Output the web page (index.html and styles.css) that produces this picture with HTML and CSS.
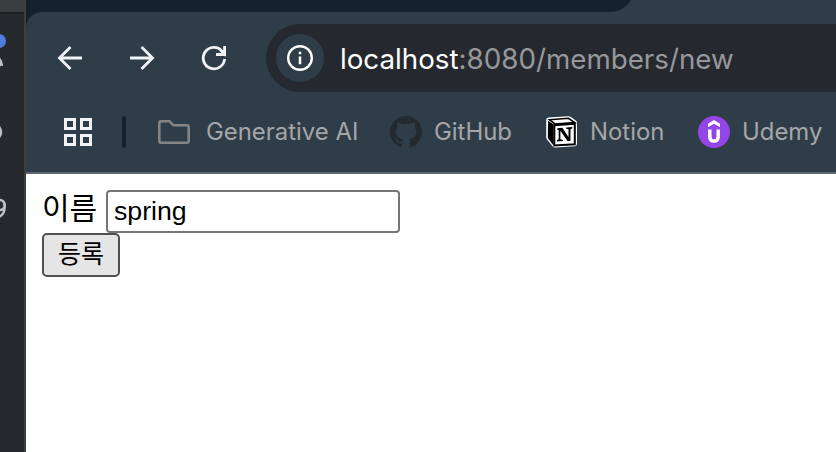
FILE: index.html
```html
<!DOCTYPE html>
<html lang="ko">
<head>
<meta charset="utf-8">
<title>localhost:8080/members/new</title>
<link rel="stylesheet" href="styles.css">
</head>
<body>
<div class="desktop">
  <aside class="behind">
    <svg width="24" height="226" viewBox="0 0 24 226" fill="none">
      <circle cx="-1" cy="41" r="7" fill="#4e7edb"/>
      <path d="M-3 57q4 3 4.500 9" stroke="#bcbec4" stroke-width="3.500"/>
      <ellipse cx="-4" cy="132" rx="5" ry="6.500" stroke="#bcbec4" stroke-width="2.500"/>
      <ellipse cx="0" cy="205" rx="4.600" ry="5" stroke="#bcbec4" stroke-width="2.500"/>
      <path d="M4.600 204q.6 9-4 12-3 1-6-1" stroke="#bcbec4" stroke-width="2.500"/>
    </svg>
  </aside>
  <main class="window">
    <div class="tabs"><div class="strip"></div></div>
    <header class="chrome">
      <div class="toolbar">
        <svg class="nav" viewBox="0 0 24 24"><path d="M24 12H2M12.500 1 1.500 12l11 11"/></svg>
        <svg class="nav" viewBox="0 0 24 24"><path d="M0 12h22M11.500 1l11 11-11 11"/></svg>
        <svg class="nav" viewBox="0 0 24 24"><path d="M22.600 13A10.700 10.700 0 1 1 20.200 5.300"/><path d="M22.600 0v8.500H14"/><path d="M18.500 4l3.500 3.500v-3"/></svg>
        <div class="address">
          <span class="info"><svg width="26" height="26" viewBox="0 0 26 26"><circle cx="13" cy="13" r="11.800" fill="none" stroke="#fff" stroke-width="2.400"/><path d="M13 11.500V19.200M13 6.800v2.500" stroke="#fff" stroke-width="2.500"/></svg></span>
          <span class="url"><b>localhost</b>:8080/members/new</span>
        </div>
      </div>
      <nav class="bookmarks">
        <svg class="apps" width="28" height="28" viewBox="0 0 28 28"><path d="M1.500 1.500h9v9h-9zM17.500 1.500h9v9h-9zM1.500 17.500h9v9h-9zM17.500 17.500h9v9h-9z" fill="none" stroke="#f2f3f7" stroke-width="3"/></svg>
        <i class="divider"></i>
        <a class="mark ai"><svg width="32" height="32" viewBox="0 0 32 32"><path d="M3 5.300h8.500l4 4H29q1.700 0 1.700 1.700v14q0 1.700-1.700 1.700H3q-1.700 0-1.700-1.700V7q0-1.700 1.700-1.700z" fill="none" stroke="#858585" stroke-width="2.600"/></svg><span>Generative AI</span></a>
        <a class="mark gh"><svg width="32" height="32" viewBox="0 0 16 16"><path fill="#24292e" d="M8 0C3.580 0 0 3.580 0 8c0 3.540 2.290 6.530 5.470 7.590.4.070.55-.17.55-.38 0-.19-.01-.82-.01-1.490-2.010.37-2.530-.49-2.690-.94-.09-.23-.48-.94-.82-1.130-.28-.15-.68-.52-.01-.53.63-.01 1.080.58 1.230.82.72 1.210 1.870.87 2.330.66.07-.52.28-.87.51-1.070-1.780-.2-3.640-.89-3.640-3.950 0-.87.31-1.590.82-2.150-.08-.2-.36-1.020.08-2.120 0 0 .67-.21 2.200.82.64-.18 1.320-.27 2-.27s1.360.09 2 .27c1.530-1.040 2.200-.82 2.200-.82.44 1.100.16 1.920.08 2.120.51.56.82 1.270.82 2.150 0 3.070-1.870 3.750-3.650 3.950.29.25.54.73.54 1.480 0 1.070-.01 1.930-.01 2.200 0 .21.15.46.55.38A8.010 8.010 0 0 0 16 8c0-4.420-3.580-8-8-8z"/></svg><span>GitHub</span></a>
        <a class="mark no"><svg width="32" height="32" viewBox="0 0 32 32"><path d="M2.500 1.500 22 .3q1.500-.1 2.800.8L30 4.800q1 .7 1 2v21q0 2.200-2 2.400L9.500 31.500q-2 .1-3-1.200L1 23.500q-.8-1-.8-2.300V4q0-2.300 2.300-2.500z" fill="#fff"/><path d="M2 4.800 7.500 8.500V29.500L2.500 23q-.6-.8-.6-2z" fill="#000"/><path d="M3.500 3.800 22.500 2.300l6.200 4.300L9 8z" fill="#fff" stroke="#000" stroke-width="1.600"/><path d="M8.300 9.200 28.800 7.800v20.400L8.300 29.500z" fill="#fff" stroke="#000" stroke-width="2"/><path d="M11.300 12.200l5-.5 6.200 9.300v-7.700l-2.200-.5v-1.300l6-.5v1.400l-1.800.7v11.700l-2.800.5-7.300-10.500v8.500l2.600.6V25l-6 .5V24l1.700-.7v-9l-1.400-.6z" fill="#000"/></svg><span>Notion</span></a>
        <a class="mark ud"><svg width="32" height="32" viewBox="0 0 32 32"><circle cx="16" cy="16" r="16" fill="#9345e8"/><path d="M10 7.800 16 4l6 3.800v3.400L16 7.700l-6 3.500z" fill="#fff"/><path d="M11.800 13.500v7q0 4.600 4.200 4.600t4.200-4.600v-7" fill="none" stroke="#fff" stroke-width="3.500"/></svg><span>Udemy</span></a>
      </nav>
    </header>
    <form class="page">
      <div class="field"><label for="name">이름</label><input id="name" type="text" value="spring"></div>
      <button type="button">등록</button>
    </form>
  </main>
</div>
</body>
</html>
```
FILE: styles.css
```css
* { box-sizing: border-box; }
body { margin: 0; overflow: hidden; font-family: Inter, "Noto Sans CJK KR", sans-serif; }
.desktop { display: flex; width: 836px; height: 452px; background: #14222c; }
.behind {
  width: 26px; flex: none; border-right: 2px solid #3d3e40;
  background: linear-gradient(#3b3d3e 0 12px, #1d1e20 12px 14px, #27292c 14px);
}
.behind svg { display: block; }
.window { flex: 1; min-width: 0; display: flex; flex-direction: column; }
.tabs { display: flex; align-items: flex-end; height: 12px; overflow: hidden; background: #2f3d48; }
.strip { width: 608px; height: 24px; background: #14222c; border-bottom-right-radius: 24px; }
.chrome { height: 162px; background: #2f3d48; border-bottom: 2px solid #5b6776; border-top-left-radius: 16px; }
.toolbar { display: flex; align-items: center; height: 92px; padding-left: 32px; }
.nav { width: 24px; height: 24px; margin-right: 48px; flex: none; fill: none; stroke: #f2f3f7; stroke-width: 2.800; overflow: visible; }
.address {
  display: flex; align-items: center; flex: 1; height: 68px; margin-left: -8px; padding-left: 10px;
  background: #26282f; border-radius: 34px 0 0 34px; white-space: nowrap;
}
.info { width: 48px; height: 48px; border-radius: 50%; background: #2f3d48; display: grid; place-items: center; }
.url { margin-left: 16px; padding-top: 1px; font-size: 27.75px; line-height: 32px; color: #97989b; }
.url b { font-weight: 400; color: #fff; }
.bookmarks { display: flex; align-items: center; height: 56px; padding-left: 38px; white-space: nowrap; }
.divider { width: 4px; height: 32px; margin: 0 32px 0 30px; border-radius: 2px; background: #14222c; }
.mark { display: flex; align-items: center; gap: 16px; flex: none; color: #a5a6a8; font-size: 23.9px; line-height: 30px; }
.ai { width: 232px; }
.gh { width: 156px; gap: 12px; }
.no { width: 152px; gap: 12px; }
.ud { gap: 12px; }
.page { flex: 1; padding: 16px; background: #fff; font-family: "Liberation Sans", "Noto Sans CJK KR", sans-serif; color: #000; }
.field { display: flex; height: 43px; }
label { width: 64px; font-size: 30px; line-height: 38px; }
input {
  width: 294px; height: 43px; padding: 0 6px; border: 2px solid #767676; border-radius: 4px;
  background: #fff; font: 26.67px "Liberation Sans", sans-serif; color: #000;
}
button {
  display: block; width: 78px; height: 44px; padding: 0 0 6px; border: 2px solid #505050; border-radius: 5px;
  background: #e5e5e5; color: #000; font: 25px/34px "Noto Sans CJK KR", sans-serif;
}
```
